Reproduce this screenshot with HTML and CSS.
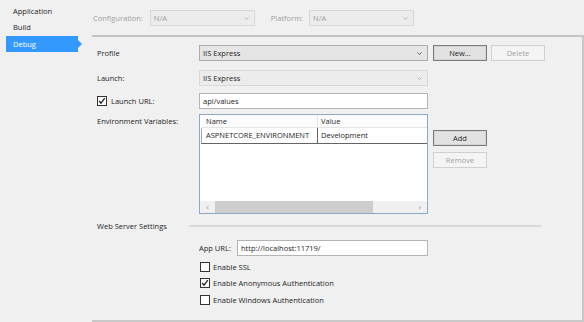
FILE: index.html
```html
<!DOCTYPE html>
<html lang="en">
<head>
  <meta charset="UTF-8" />
  <title>Debug</title>
  <link rel="stylesheet" href="styles.css">
</head>
<body>
<div class="window">

  <!-- Left tabs -->
  <nav class="tabs">
    <div class="tab">Application</div>
    <div class="tab">Build</div>
    <div class="tab active">Debug</div>
  </nav>

  <main class="page">

    <!-- Configuration / Platform -->
    <div class="config-bar">
      <span class="muted">Configuration:</span>
      <div class="select disabled cfg">
        <span class="muted">N/A</span>
        <svg class="chev" width="5" height="3" viewBox="0 0 5 3"><polyline points="0.5,0.5 2.5,2.5 4.5,0.5"/></svg>
      </div>
      <span class="muted plat-label">Platform:</span>
      <div class="select disabled cfg">
        <span class="muted">N/A</span>
        <svg class="chev" width="5" height="3" viewBox="0 0 5 3"><polyline points="0.5,0.5 2.5,2.5 4.5,0.5"/></svg>
      </div>
    </div>

    <section class="panel">

      <div class="row r-profile">
        <div class="label">Profile</div>
        <div class="select field">
          <span>IIS Express</span>
          <svg class="chev" width="5" height="3" viewBox="0 0 5 3"><polyline points="0.5,0.5 2.5,2.5 4.5,0.5"/></svg>
        </div>
        <button class="btn default">New...</button>
        <button class="btn delete" disabled>Delete</button>
      </div>

      <div class="row r-launch">
        <div class="label">Launch:</div>
        <div class="select disabled field">
          <span>IIS Express</span>
          <svg class="chev" width="5" height="3" viewBox="0 0 5 3"><polyline points="0.5,0.5 2.5,2.5 4.5,0.5"/></svg>
        </div>
      </div>

      <div class="row r-url">
        <div class="label check-label">
          <span class="box"><svg width="8" height="8" viewBox="0 0 8 8"><polyline points="1.2,4 3,6.2 6.8,1.2"/></svg></span>
          <span>Launch URL:</span>
        </div>
        <div class="input field">api/values</div>
      </div>

      <div class="row r-env">
        <div class="label env-label">Environment Variables:</div>
        <div class="grid field">
          <div class="grid-head">
            <div class="col-name">Name</div>
            <div class="col-value">Value</div>
          </div>
          <div class="grid-row">
            <div class="col-name">ASPNETCORE_ENVIRONMENT</div>
            <div class="col-value">Development</div>
          </div>
          <div class="hscroll">
            <span class="arrow">&lsaquo;</span>
            <span class="thumb"></span>
            <span class="track"></span>
            <span class="arrow">&rsaquo;</span>
          </div>
        </div>
        <div class="grid-buttons">
          <button class="btn default">Add</button>
          <button class="btn" disabled>Remove</button>
        </div>
      </div>

      <div class="row r-web">
        <div class="web-label">Web Server Settings</div>
        <div class="sep"></div>
      </div>

      <div class="row r-app indent">
        <div class="app-label">App URL:</div>
        <div class="input app-input">http://localhost:11719/</div>
      </div>

      <div class="row r-check indent first">
        <span class="box"></span>
        <span>Enable SSL</span>
      </div>
      <div class="row r-check indent">
        <span class="box"><svg width="8" height="8" viewBox="0 0 8 8"><polyline points="1.2,4 3,6.2 6.8,1.2"/></svg></span>
        <span>Enable Anonymous Authentication</span>
      </div>
      <div class="row r-check indent last">
        <span class="box"></span>
        <span>Enable Windows Authentication</span>
      </div>

    </section>
  </main>
</div>
</body>
</html>
```

FILE: styles.css
```css
* {
  box-sizing: border-box;
  margin: 0;
  padding: 0;
}

body {
  background: #f0f0f0;
  color: #1e1e1e;
  font-family: 'Open Sans', 'Liberation Sans', sans-serif;
  font-size: 7.5px;
  width: 584px;
  height: 322px;
  overflow: hidden;
}

.window {
  display: flex;
  height: 322px;
}

/* left tabs */
.tabs {
  width: 92px;
  flex: none;
  padding-top: 3px;
}

.tab {
  height: 16px;
  line-height: 16px;
  width: 72px;
  margin-left: 6px;
  padding-left: 7px;
}

.tab.active {
  margin-top: 1px;
  background: #3399ff;
  color: #fff;
  position: relative;
}

.tab.active::after {
  content: '';
  position: absolute;
  right: -4px;
  top: 4px;
  border-left: 4px solid #3399ff;
  border-top: 4px solid transparent;
  border-bottom: 4px solid transparent;
}

/* right page */
.page {
  flex: 1;
  display: flex;
  flex-direction: column;
}

.config-bar {
  height: 35px;
  flex: none;
  display: flex;
  align-items: center;
  padding-left: 1px;
  padding-top: 1px;
}

.muted {
  color: #a0a0a0;
}

.select {
  display: flex;
  align-items: center;
  justify-content: space-between;
  height: 16px;
  padding: 0 5px 0 3px;
  background: #e5e5e5;
  border: 1px solid #acacac;
}

.select.disabled {
  background: #ececec;
  border-color: #d9d9d9;
}

.chev polyline {
  fill: none;
  stroke: #606060;
  stroke-width: 1;
}

.select.disabled .chev polyline {
  stroke: #b4b4b4;
}

.cfg {
  width: 105px;
  margin-left: 7px;
}

.plat-label {
  margin-left: 16px;
}

.cfg + .plat-label + .cfg {
  margin-left: 6px;
}

.panel {
  flex: 1;
  border-top: 2px solid #c4c4c4;
  border-right: 2px solid #c8c8c8;
  border-bottom: 2px solid #c8c8c8;
  padding-left: 5px;
}

.row {
  display: flex;
  align-items: center;
  height: 16px;
}

.label {
  width: 102px;
  flex: none;
}

.field {
  width: 229px;
  flex: none;
}

.r-profile { margin-top: 8px; }
.r-launch { margin-top: 9px; }
.r-url { margin-top: 7px; }

.input {
  height: 16px;
  line-height: 14px;
  padding-left: 3px;
  background: #fff;
  border: 1px solid #b4b4b4;
}

/* buttons */
.btn {
  font: inherit;
  width: 54px;
  height: 16px;
  margin-left: 5px;
  background: #e1e1e1;
  border: 1px solid #adadad;
  color: #1e1e1e;
}

.btn.default {
  border-color: #7a7a7a;
  box-shadow: inset 0 0 0 1px #d4d4d4;
}

.btn:disabled {
  background: #f4f4f4;
  border-color: #d0d0d0;
  color: #a3a3a3;
}

.btn.delete {
  margin-left: 4px;
}

/* checkboxes */
.check-label {
  display: flex;
  align-items: center;
}

.box {
  width: 10px;
  height: 10px;
  flex: none;
  background: #fff;
  border: 1px solid #333;
  margin-right: 4px;
  display: flex;
  align-items: center;
  justify-content: center;
}

.box polyline {
  fill: none;
  stroke: #222;
  stroke-width: 1.3;
}

/* environment grid */
.r-env {
  margin-top: 5px;
  height: 100px;
  align-items: flex-start;
}

.env-label {
  line-height: 14px;
}

.grid {
  height: 100px;
  background: #fff;
  border: 1px solid #8ea8c8;
  padding-left: 1px;
  display: flex;
  flex-direction: column;
}

.grid-head,
.grid-row {
  display: flex;
  height: 13px;
  line-height: 12px;
}

.grid-head {
  background: #fcfcfc;
  border-bottom: 1px solid #e5e5e5;
}

.col-name {
  width: 117px;
  padding-left: 5px;
  border-right: 1px solid #e5e5e5;
}

.col-value {
  padding-left: 3px;
}

.grid-row {
  height: 16px;
  line-height: 15px;
  border-left: 1px solid #a9a9a9;
  border-bottom: 1px solid #646464;
}

.grid-row .col-name {
  width: 116px;
  padding-left: 4px;
  border-right-color: #646464;
}

.hscroll {
  margin-top: auto;
  margin-left: -1px;
  height: 12px;
  display: flex;
  background: #f0f0f0;
}

.arrow {
  width: 15px;
  text-align: center;
  line-height: 11px;
  color: #a6a6a6;
  font-size: 9px;
}

.thumb {
  width: 158px;
  background: #cdcdcd;
}

.track {
  flex: 1;
}

.grid-buttons {
  padding-top: 16px;
  display: flex;
  flex-direction: column;
  gap: 6px;
}

/* web server settings */
.r-web {
  margin-top: 4px;
}

.web-label {
  width: 92px;
  flex: none;
}

.sep {
  width: 352px;
  height: 2px;
  background: #d9d9d9;
}

.indent {
  padding-left: 102px;
}

.r-app {
  margin-top: 6px;
}

.app-label {
  width: 38px;
  flex: none;
}

.app-input {
  width: 191px;
}

.r-check.indent {
  padding-left: 103px;
}

.r-check .box {
  margin-right: 3px;
}

.r-check.first { margin-top: 3px; }
.r-check.last { margin-top: 1px; }
```
